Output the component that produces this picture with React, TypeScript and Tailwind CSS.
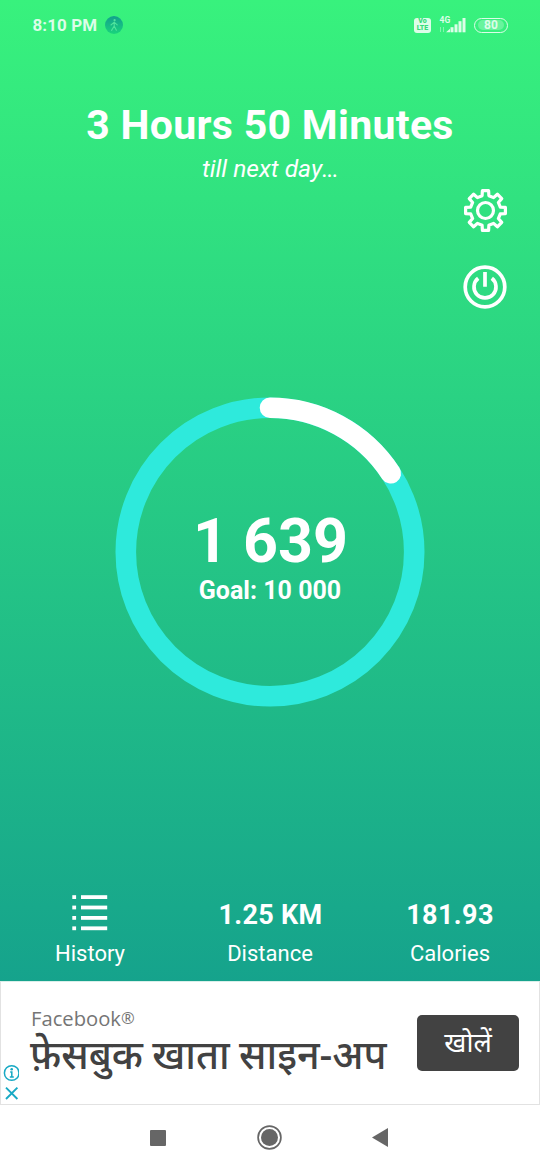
const RADIUS = 144.2;
const CIRCUMFERENCE = 2 * Math.PI * RADIUS;

const steps = {
  current: '1 639',
  goal: '10 000',
  progress: 0.158
};

const teeth = [0, 45, 90, 135, 180, 225, 270, 315];

// One tooth (pointing up) is rotated around the center to get the full outline
const toothPoints = [
  [-3.4, -14.8],
  [-3.1, -19.9],
  [3.1, -19.9],
  [3.4, -14.8]
];

const gearOutline = teeth
  .flatMap((deg) => {
    const a = (deg * Math.PI) / 180;
    return toothPoints.map(([x, y]) => {
      const px = x * Math.cos(a) - y * Math.sin(a);
      const py = x * Math.sin(a) + y * Math.cos(a);
      return `${px.toFixed(2)},${py.toFixed(2)}`;
    });
  })
  .join(' ');

const StatusBar = () => (
  <div className="flex h-[50px] items-center justify-between pl-[32.5px] pr-8 text-[#dcfde8]">
    <div className="flex items-center gap-[7.5px]">
      <span className="text-[17px] font-bold leading-5 tracking-[0.1px]">8:10 PM</span>
      <svg className="h-[18px] w-[18px]" viewBox="0 0 18 18" fill="none">
        <defs>
          <linearGradient id="badge" x1="0" y1="0" x2="0" y2="1">
            <stop offset="0" stopColor="#12a08d" />
            <stop offset="1" stopColor="#19d47c" />
          </linearGradient>
        </defs>
        <circle cx="9" cy="9" r="9" fill="url(#badge)" />
        <circle cx="9.6" cy="4.2" r="1.1" fill="#4fe39c" />
        <path d="M9.2 6v4l2.2 4.2M9.2 10l-2.6 4.4M6 9l3.2-2.8 3 2.6" stroke="#4fe39c" strokeWidth="1.1" strokeLinecap="round" />
      </svg>
    </div>
    <div className="flex items-center">
      <div className="flex h-[15px] w-[17px] flex-col items-center justify-center rounded-[3px] bg-[#dcfde8] text-[7px] font-black leading-[7px] text-[#36dc7b]">
        <span>Vo</span>
        <span>LTE</span>
      </div>
      <svg className="ml-[7px] h-4 w-[28px] overflow-visible" viewBox="0 0 28 16" fill="currentColor">
        <text x="1.5" y="5.8" fontSize="8.5" fontWeight="700">4G</text>
        <path d="M2.5 10v5M5.5 10v5" stroke="currentColor" strokeWidth="1" opacity=".45" />
        <path d="M8 15.3l4-3.6v3.6z" />
        <rect x="12.5" y="10.2" width="3" height="5.1" />
        <rect x="16.5" y="7.3" width="3" height="8" />
        <rect x="20.5" y="4.2" width="3" height="11.1" />
        <rect x="24.5" y="1" width="3" height="14.3" />
      </svg>
      <div className="ml-[8px] flex h-[15px] w-[34px] items-center justify-center rounded-full border-[1.5px] border-[#dcfde8]">
        <span className="flex h-[10px] w-[26px] items-center justify-center rounded-full bg-white/25 text-[12px] font-bold leading-none">80</span>
      </div>
    </div>
  </div>
);

const StepRing = () => (
  <div className="relative mx-auto mt-[87.5px] h-[310px] w-[310px]">
    <svg className="h-full w-full -rotate-90" viewBox="0 0 310 310" fill="none" strokeWidth="20.6">
      <circle cx="155" cy="155" r={RADIUS} stroke="#2eeadc" />
      <circle
        cx="155"
        cy="155"
        r={RADIUS}
        stroke="white"
        strokeLinecap="round"
        strokeDasharray={`${CIRCUMFERENCE * steps.progress} ${CIRCUMFERENCE}`}
      />
    </svg>
    <div className="absolute inset-0 flex flex-col items-center pt-[112.5px]">
      <span className="pl-px text-[61px] font-bold leading-[64px]">{steps.current}</span>
      <span className="mt-[3px] text-[25px] font-bold leading-[30px]">Goal: {steps.goal}</span>
    </div>
  </div>
);

const AdBanner = () => (
  <div className="relative flex h-[124px] items-start border border-[#e2e2e2] border-t-[#d9efea] bg-white pl-[29px] pr-[20px] font-['Noto_Sans','Noto_Sans_Devanagari',sans-serif]">
    <div className="flex-1">
      <p className="mt-[24px] pl-px font-['Open_Sans',sans-serif] text-[20.2px] leading-6 text-[#757575]">
        Facebook<span className="relative -top-0.5 text-[16.5px] leading-none">®</span>
      </p>
      <p className="-mt-[3px] whitespace-nowrap text-[39.6px] font-medium leading-[54px] text-[#424242] [word-spacing:-1px]">
        फ़ेसबुक खाता साइन-अप
      </p>
    </div>
    <button className="mt-[33px] h-14 w-[102px] shrink-0 rounded-[5px] bg-[#424242] pb-1 text-[27px] leading-none text-white">
      खोलें
    </button>
    <svg className="absolute bottom-0 left-[2px] h-[40px] w-4" viewBox="0 0 16 40" fill="none" stroke="#17a9c4" strokeWidth="1.5">
      <circle cx="8.7" cy="9" r="7.3" />
      <path d="M7.2 8h1.6v5M6.8 13h4" strokeWidth="1.5" />
      <circle cx="8.7" cy="5.3" r="1.3" fill="#17a9c4" stroke="none" />
      <path d="M3 23.6l11.4 11.4M14.4 23.6L3 35" strokeWidth="1.9" />
    </svg>
  </div>
);

const App = () => {
  return (
    <div className="flex h-[1170px] w-[540px] flex-col overflow-hidden bg-white font-[Roboto,sans-serif]">
      <div className="h-[981px] bg-[linear-gradient(to_bottom,#38f27d_0px,#11998e_1105px)] text-white">
        <StatusBar />

        <header className="flex flex-col items-center pt-[50px] text-center">
          <h1 className="text-[41px] font-bold leading-[50px] tracking-[0.3px]">3 Hours 50 Minutes</h1>
          <p className="mt-1 text-[24.6px] italic leading-[30px]">till next day<span className="tracking-[-1px]">...</span></p>
        </header>

        {/* Settings / power */}
        <div className="flex flex-col items-end gap-8 pr-[33px] pt-[5px]">
          <button aria-label="Settings" className="h-11 w-11">
            <svg viewBox="-22.5 -21.5 44 44" fill="none" stroke="currentColor" strokeWidth="3.2" strokeLinejoin="round">
              <polygon points={gearOutline} />
              <circle r="8" />
            </svg>
          </button>
          <button aria-label="Power" className="h-11 w-11">
            <svg viewBox="-22 -22 44 44" fill="none" stroke="currentColor" strokeWidth="3.7">
              <circle r="19.8" />
              <path d="M-6.8-8.7a11 11 0 1 0 13.6 0M0-15V-.3" />
            </svg>
          </button>
        </div>

        <StepRing />

        <div className="mt-[185.5px] grid grid-cols-3 text-center">
          <div className="flex flex-col items-center">
            <svg className="mt-[3px] h-[36px] w-[36px]" viewBox="0 0 36 36" fill="currentColor">
              {[0.2, 10.6, 21, 31.4].map((y) => (
                <g key={y}>
                  <rect x="0.3" y={y} width="3.8" height="3.8" />
                  <rect x="9" y={y} width="26.2" height="3.8" />
                </g>
              ))}
            </svg>
            <span className="mt-[8px] text-[22px] leading-[30px]">History</span>
          </div>
          <div className="flex flex-col items-center">
            <span className="mt-[7px] pl-px text-[27px] font-bold leading-8 tracking-[0.3px]">1.25 KM</span>
            <span className="mt-[8px] text-[22px] leading-[30px]">Distance</span>
          </div>
          <div className="flex flex-col items-center">
            <span className="mt-[7px] text-[27px] font-bold leading-8 tracking-[0.4px]">181.93</span>
            <span className="mt-[8px] text-[22px] leading-[30px]">Calories</span>
          </div>
        </div>
      </div>

      <AdBanner />

      {/* Android navigation */}
      <nav className="flex h-[65px] items-center justify-between pl-[150px] pr-[152px] text-[#666666]">
        <div className="h-4 w-4 rounded-[1px] bg-[#666666]" />
        <svg className="ml-px h-[25px] w-[25px]" viewBox="0 0 25 25" fill="none" stroke="currentColor">
          <circle cx="12.5" cy="12.5" r="11.4" strokeWidth="1.7" />
          <circle cx="12.5" cy="12.5" r="8.5" fill="currentColor" stroke="none" />
        </svg>
        <svg className="h-[19px] w-4" viewBox="0 0 16 19" fill="currentColor">
          <path d="M0 9.5L16 0v19z" />
        </svg>
      </nav>
    </div>
  );
};

export default App;
